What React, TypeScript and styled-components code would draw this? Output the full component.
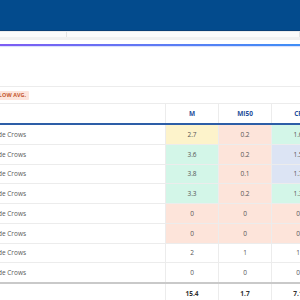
import React from 'react';
import styled, { createGlobalStyle } from 'styled-components';

type Tone = 'none' | 'yellow' | 'pink' | 'green' | 'blue';

interface Row {
  team: string;
  m: [number | string, Tone];
  mi50: [number | string, Tone];
  cf: [number | string, Tone];
}

const GlobalStyle = createGlobalStyle`
  html, body {
    margin: 0;
    padding: 0;
    background: #ffffff;
    overflow: hidden;
  }
  body {
    font-family: "Open Sans", "Noto Sans", sans-serif;
  }
`;

const Page = styled.div`
  width: 300px;
  height: 300px;
  overflow: hidden;
  background: #fff;
`;

const TopBar = styled.div`
  height: 30px;
  background: #034b8d;
  border-bottom: 1px solid #0a3f76;
`;

const TabStrip = styled.div`
  display: flex;
  height: 8px;
  background: #f1f1f1;
  border-top: 1px solid #ececec;
`;

const Tab = styled.div<{ $w: number }>`
  width: ${(p) => p.$w}px;
  height: 5px;
  background: #fbfbfb;
  border-right: 1px solid #e4e4e4;
`;

const AccentLine = styled.div`
  margin-top: 4px;
  height: 2px;
  background: linear-gradient(90deg, #7d5cf3 0%, #5f79f4 50%, #3f8ef6 100%);
  box-shadow: 0 1px 1px rgba(90, 120, 240, 0.25);
`;

const Blank = styled.div`
  height: 40px;
`;

const Shifted = styled.div`
  margin-left: -62px;
  width: 460px;
`;

const LegendRow = styled.div`
  display: flex;
  align-items: center;
  height: 16px;
  border-top: 1px solid #ececec;
  border-bottom: 1px solid #ececec;
  padding-left: 51px;
`;

const Badge = styled.span`
  display: inline-flex;
  align-items: center;
  height: 9px;
  padding: 0 3px;
  background: #fde5dc;
  color: #c4552b;
  font-size: 5.4px;
  font-weight: 700;
  letter-spacing: 0.1px;
  text-transform: uppercase;
  border-radius: 1px;
`;

const Table = styled.table`
  border-collapse: collapse;
  table-layout: fixed;
  width: 440px;
  font-size: 6.5px;
  color: #555;
`;

const HeadCell = styled.th<{ $first?: boolean }>`
  height: 19px;
  padding: 0;
  font-weight: 700;
  color: #1f4f9c;
  text-align: center;
  border-right: 1px solid #ececec;
  border-bottom: 2px solid #2d5ea7;
  width: ${(p) => (p.$first ? '227px' : '52px')};
`;

const toneBg: Record<Tone, string> = {
  none: '#ffffff',
  yellow: '#fdf3cb',
  pink: '#fde4da',
  green: '#d3f6e8',
  blue: '#dce4f4',
};

const Cell = styled.td<{ $tone?: Tone }>`
  height: 18.75px;
  padding: 0;
  text-align: center;
  background: ${(p) => toneBg[p.$tone || 'none']};
  border-right: 1px solid #ececec;
  border-bottom: 1px solid #ececec;
`;

const NameCell = styled.td`
  height: 18.75px;
  padding: 0 0 0 40px;
  text-align: left;
  color: #5a5a5a;
  border-right: 1px solid #ececec;
  border-bottom: 1px solid #ececec;
  white-space: nowrap;
`;

const TotalCell = styled.td`
  height: 18px;
  padding: 0;
  text-align: center;
  font-weight: 700;
  color: #333;
  border-top: 2px solid #c9c9c9;
  border-right: 1px solid #ececec;
`;

const rows: Row[] = [
  { team: 'Riverside Crows', m: [2.7, 'yellow'], mi50: [0.2, 'pink'], cf: [1.6, 'green'] },
  { team: 'Riverside Crows', m: [3.6, 'green'], mi50: [0.2, 'pink'], cf: [1.5, 'blue'] },
  { team: 'Riverside Crows', m: [3.8, 'green'], mi50: [0.1, 'pink'], cf: [1.7, 'blue'] },
  { team: 'Riverside Crows', m: [3.3, 'green'], mi50: [0.2, 'pink'], cf: [1.3, 'green'] },
  { team: 'Riverside Crows', m: [0, 'pink'], mi50: [0, 'pink'], cf: [0, 'pink'] },
  { team: 'Riverside Crows', m: [0, 'pink'], mi50: [0, 'pink'], cf: [0, 'pink'] },
  { team: 'Riverside Crows', m: [2, 'none'], mi50: [1, 'none'], cf: [1, 'none'] },
  { team: 'Riverside Crows', m: [0, 'none'], mi50: [0, 'none'], cf: [0, 'none'] },
];

const App = () => {
  return (
    <Page>
      <GlobalStyle />
      <TopBar />
      <TabStrip>
        <Tab $w={66} />
        <Tab $w={234} />
      </TabStrip>
      <AccentLine />
      <Blank />
      <Shifted>
        <LegendRow>
          <Badge>Below avg.</Badge>
        </LegendRow>
        <Table>
          <thead>
            <tr>
              <HeadCell $first></HeadCell>
              <HeadCell>M</HeadCell>
              <HeadCell>MI50</HeadCell>
              <HeadCell>CF</HeadCell>
              <HeadCell>CA</HeadCell>
            </tr>
          </thead>
          <tbody>
            {rows.map((r, i) => (
              <tr key={i}>
                <NameCell>{r.team}</NameCell>
                <Cell $tone={r.m[1]}>{r.m[0]}</Cell>
                <Cell $tone={r.mi50[1]}>{r.mi50[0]}</Cell>
                <Cell $tone={r.cf[1]}>{r.cf[0]}</Cell>
                <Cell>0</Cell>
              </tr>
            ))}
            <tr>
              <TotalCell></TotalCell>
              <TotalCell>15.4</TotalCell>
              <TotalCell>1.7</TotalCell>
              <TotalCell>7.1</TotalCell>
              <TotalCell>0</TotalCell>
            </tr>
          </tbody>
        </Table>
      </Shifted>
    </Page>
  );
};

export default App;
